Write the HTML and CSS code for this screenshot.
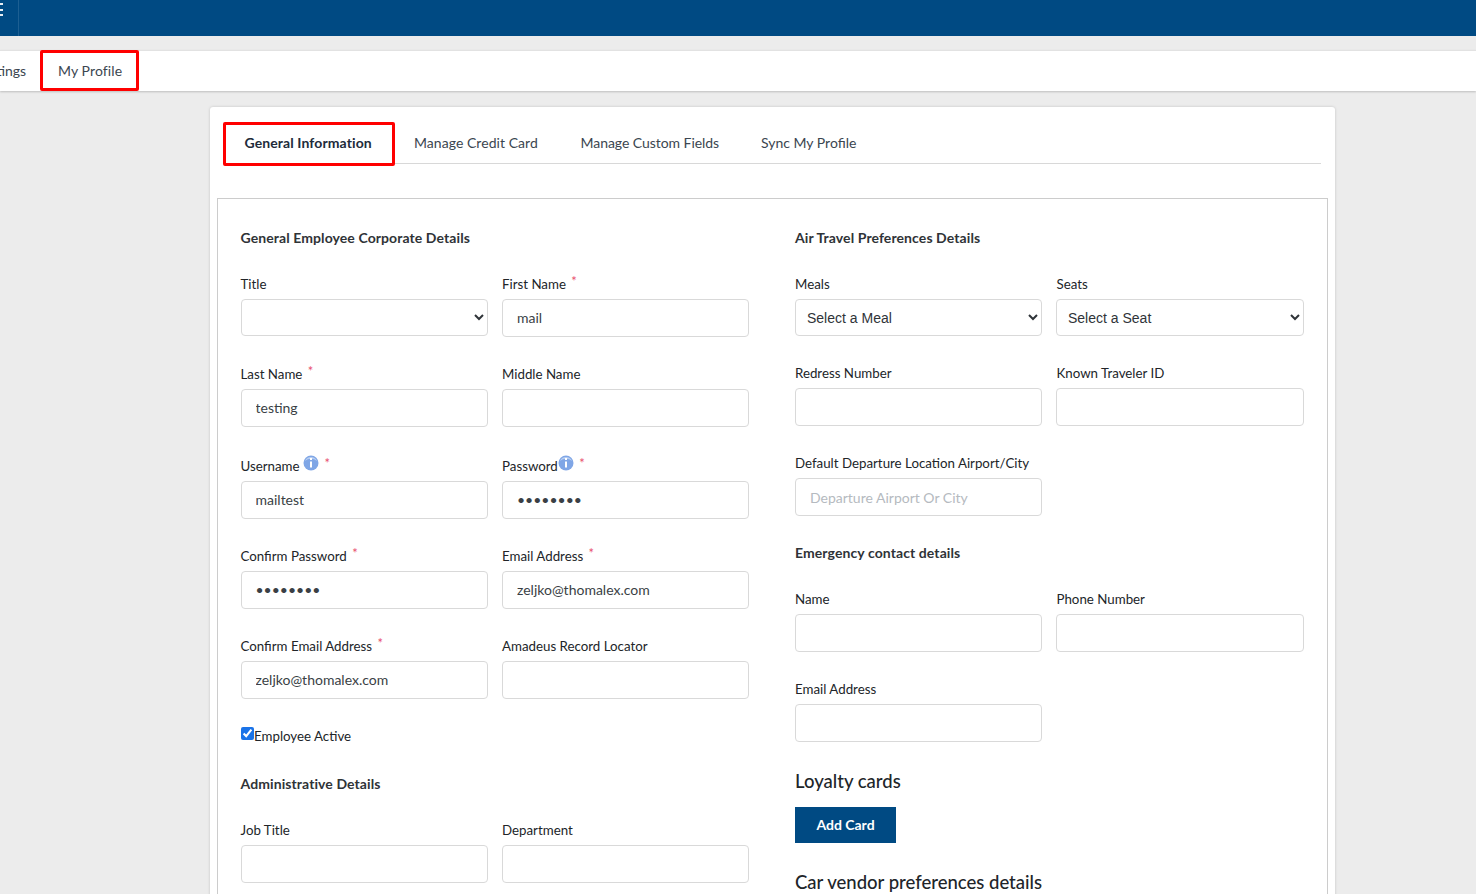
FILE: index.html
```html
<!DOCTYPE html>
<html lang="en">
<head>
<meta charset="utf-8">
<title>My Profile</title>
<link rel="stylesheet" href="styles.css">
</head>
<body>
<header class="topbar">
  <div class="menu-cell"><span class="menu-bars"></span></div>
</header>
<nav class="subnav">
  <a class="subnav-item subnav-clipped">Settings</a>
  <a class="subnav-item subnav-active">My Profile</a>
</nav>
<main class="card">
  <div class="tabs">
    <a class="tab tab-active">General Information</a>
    <a class="tab tab-credit">Manage Credit Card</a>
    <a class="tab tab-custom">Manage Custom Fields</a>
    <a class="tab tab-sync">Sync My Profile</a>
  </div>
  <div class="panel">
    <section class="col col-left">
      <h4 class="section-title">General Employee Corporate Details</h4>
      <div class="row">
        <div class="field"><label class="label">Title</label><select class="control select"><option></option></select></div>
        <div class="field"><label class="label">First Name <sup class="req">*</sup></label><input class="control" value="mail"></div>
      </div>
      <div class="row">
        <div class="field"><label class="label">Last Name <sup class="req">*</sup></label><input class="control" value="testing"></div>
        <div class="field"><label class="label">Middle Name</label><input class="control"></div>
      </div>
      <div class="row">
        <div class="field"><label class="label label-tall">Username <svg class="info" viewBox="0 0 16 16"><circle cx="8" cy="8" r="7.500" fill="#7fa6e6"/><path d="M2 6a6.500 6.500 0 0 1 12 0a9 9 0 0 0-12 0z" fill="#b9cff2"/><rect x="7" y="3" width="2" height="2" fill="#fff"/><rect x="7" y="6.500" width="2" height="6" fill="#fff"/></svg> <sup class="req">*</sup></label><input class="control" value="mailtest"></div>
        <div class="field"><label class="label label-tall">Password<svg class="info" viewBox="0 0 16 16"><circle cx="8" cy="8" r="7.500" fill="#7fa6e6"/><path d="M2 6a6.500 6.500 0 0 1 12 0a9 9 0 0 0-12 0z" fill="#b9cff2"/><rect x="7" y="3" width="2" height="2" fill="#fff"/><rect x="7" y="6.500" width="2" height="6" fill="#fff"/></svg> <sup class="req">*</sup></label><input class="control" type="password" value="password"></div>
      </div>
      <div class="row">
        <div class="field"><label class="label">Confirm Password <sup class="req">*</sup></label><input class="control" type="password" value="password"></div>
        <div class="field"><label class="label">Email Address <sup class="req">*</sup></label><input class="control" value="zeljko@thomalex.com"></div>
      </div>
      <div class="row">
        <div class="field"><label class="label">Confirm Email Address <sup class="req">*</sup></label><input class="control" value="zeljko@thomalex.com"></div>
        <div class="field"><label class="label">Amadeus Record Locator</label><input class="control"></div>
      </div>
      <label class="check"><input class="check-box" type="checkbox" checked>Employee Active</label>
      <h4 class="section-title section-admin">Administrative Details</h4>
      <div class="row">
        <div class="field"><label class="label">Job Title</label><input class="control"></div>
        <div class="field"><label class="label">Department</label><input class="control"></div>
      </div>
    </section>
    <section class="col col-right">
      <h4 class="section-title">Air Travel Preferences Details</h4>
      <div class="row">
        <div class="field"><label class="label">Meals</label><select class="control select"><option>Select a Meal</option></select></div>
        <div class="field"><label class="label">Seats</label><select class="control select"><option>Select a Seat</option></select></div>
      </div>
      <div class="row">
        <div class="field"><label class="label">Redress Number</label><input class="control"></div>
        <div class="field"><label class="label">Known Traveler ID</label><input class="control"></div>
      </div>
      <div class="row">
        <div class="field"><label class="label">Default Departure Location Airport/City</label><input class="control" placeholder="Departure Airport Or City"></div>
        <div class="field"></div>
      </div>
      <h4 class="section-title section-emergency">Emergency contact details</h4>
      <div class="row">
        <div class="field"><label class="label">Name</label><input class="control"></div>
        <div class="field"><label class="label">Phone Number</label><input class="control"></div>
      </div>
      <div class="row">
        <div class="field"><label class="label">Email Address</label><input class="control"></div>
        <div class="field"></div>
      </div>
      <h3 class="big-title">Loyalty cards</h3>
      <button class="btn" type="button">Add Card</button>
      <h3 class="big-title big-car">Car vendor preferences details</h3>
    </section>
  </div>
</main>
</body>
</html>
```
FILE: styles.css
```css
* { box-sizing: border-box; }
html, body { margin: 0; height: 894px; overflow: hidden; }
body {
  background: #ececec;
  color: #212529;
  font-family: Lato, "Liberation Sans", sans-serif;
  font-size: 14px;
  line-height: 20px;
}
.topbar {
  height: 36px;
  background: #004a83;
  display: flex;
}
.menu-cell {
  width: 19px;
  border-right: 1px solid #1d5f92;
  overflow: hidden;
}
.menu-bars {
  display: block;
  width: 3px;
  height: 13px;
  margin-top: 3px;
  border-top: 2px solid #e8eef4;
  border-bottom: 2px solid #e8eef4;
  background: linear-gradient(#e8eef4, #e8eef4) 0 50% / 3px 2px no-repeat;
}
.subnav {
  height: 41px;
  margin-top: 14px;
  background: #fff;
  border-top: 1px solid #e2e2e2;
  box-shadow: 0 1px 2px rgba(0, 0, 0, .2);
  display: flex;
  align-items: stretch;
}
.subnav-item {
  color: #3b4650;
  display: flex;
  align-items: center;
}
.subnav-clipped {
  margin-left: -23px;
  width: 63px;
  padding-bottom: 1px;
}
.subnav-active {
  margin-top: -1px;
  width: 99px;
  height: 41px;
  padding-left: 15px;
  border: 3px solid #f00;
  border-radius: 2px;
  letter-spacing: .1px;
}
.card {
  width: 1125px;
  height: 800px;
  margin: 16px 0 0 210px;
  padding: 15px 7px 0;
  background: #fff;
  border-radius: 3px;
  box-shadow: 0 0 3px rgba(0, 0, 0, .18);
}
.tabs {
  height: 42px;
  margin: 0 7px 0 6px;
  border-bottom: 1px solid #d8d8d8;
  display: flex;
}
.tab {
  color: #3b4650;
  height: 41px;
  padding-top: 11px;
}
.tab-active {
  width: 172px;
  height: 44px;
  padding: 8px 0 0 18.500px;
  border: 3px solid #f00;
  border-radius: 2px;
  color: #212b3a;
  font-weight: 700;
  letter-spacing: .1px;
}
.tab-credit { margin-left: 19px; width: 166.500px; letter-spacing: .05px; }
.tab-custom { width: 180.500px; letter-spacing: -.05px; }
.panel {
  height: 760px;
  margin-top: 34px;
  border: 1px solid #ccc;
  display: flex;
  padding: 29px 22px 0;
}
.col { width: 509px; }
.col-right { margin-left: 46px; }
.section-title {
  margin: 0 0 26px;
  font-size: 14px;
  line-height: 20px;
  font-weight: 700;
  letter-spacing: .09px;
  color: #2f3337;
}
.col-left .section-title { padding-left: .5px; }
.row {
  display: flex;
  gap: 14px;
  margin-bottom: 27px;
}
.field { width: 247px; }
.col-left .field:first-child { width: 248px; }
.col-left .field:first-child .label { padding-left: .5px; }
.col-left .field:first-child .control { margin-left: 1px; padding-left: 13.500px; }
.col-left .control { padding-bottom: 2px; }
.col-right .field:nth-child(2) .control { width: 248px; }
.col-right .field:nth-child(2) .label { padding-left: .5px; }
.label {
  display: block;
  height: 20px;
  margin-bottom: 5px;
  color: #212529;
  font-size: 13.300px;
  white-space: nowrap;
}
.label-tall { height: 22px; padding-top: 1px; }
.req {
  color: #e8506e;
  font-size: 13px;
  line-height: 0;
  vertical-align: 3px;
  margin-left: 2px;
}
.info { width: 16px; height: 16px; vertical-align: 0; }
.control {
  display: block;
  width: 247px;
  height: 38px;
  padding: 0 14px;
  background: #fff;
  border: 1px solid #d9d9d9;
  border-radius: 4px;
  color: #3a3f45;
  font: 14px/20px Lato, "Liberation Sans", sans-serif;
  outline: none;
}
.control::placeholder { color: #b5bac0; opacity: 1; }
.select,
.col-right .field:nth-child(2) .select,
.col-left .field:first-child .select {
  height: 37px;
  padding: 0 9px 0 7px;
  font-family: "Liberation Sans", Arial, sans-serif;
  color: #2f3439;
}
.check {
  display: flex;
  align-items: flex-start;
  height: 20px;
  padding-left: 1px;
  color: #212529;
  font-size: 13.300px;
}
.check-box {
  width: 13px;
  height: 13px;
  margin: 1px 0 0;
  accent-color: #1a73e8;
}
.section-admin { margin-top: 28px; }
.section-emergency { margin-top: 0; }
.big-title {
  margin: 0;
  font-size: 18.500px;
  line-height: 24px;
  font-weight: 500;
  color: #212529;
}
.btn {
  display: block;
  width: 101px;
  height: 36px;
  margin-top: 14px;
  background: #004a83;
  border: 0;
  color: #fff;
  font: 700 14px/20px Lato, "Liberation Sans", sans-serif;
}
.big-car { margin-top: 27px; }
```
